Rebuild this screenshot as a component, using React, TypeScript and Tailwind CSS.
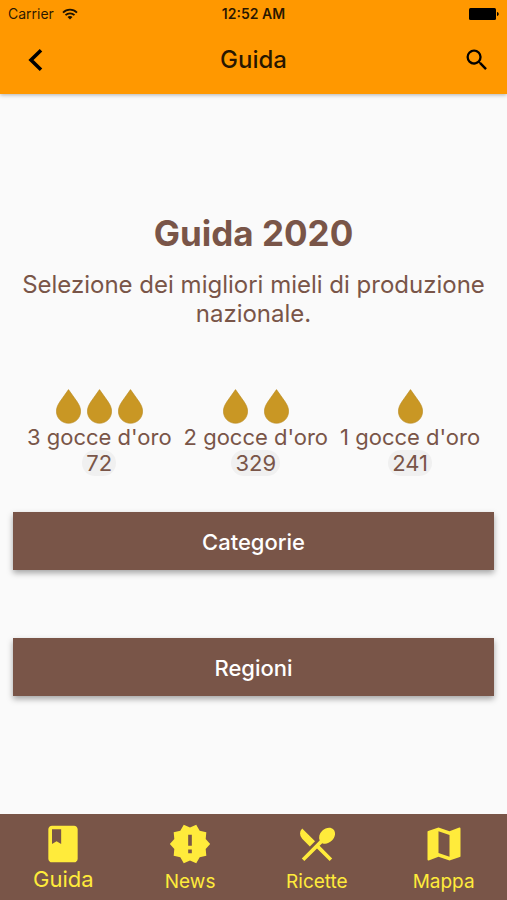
import { MdClass, MdMap, MdNewReleases, MdRestaurantMenu, MdSearch } from 'react-icons/md';

const ratings = [
  { drops: 3, label: "3 gocce d'oro", count: 72, gap: 'gap-[6px]' },
  { drops: 2, label: "2 gocce d'oro", count: 329, gap: 'gap-4' },
  { drops: 1, label: "1 gocce d'oro", count: 241, gap: 'gap-0' },
];

const tabs = [
  { label: 'Guida', icon: MdClass, active: true },
  { label: 'News', icon: MdNewReleases, active: false },
  { label: 'Ricette', icon: MdRestaurantMenu, active: false },
  { label: 'Mappa', icon: MdMap, active: false },
];

function Drop() {
  return (
    <svg viewBox="0 0 25 35" className="h-[35px] w-[25px]" aria-hidden="true">
      <path
        d="M12.5.6L21 12.6C23.200 15.900 24.600 18.800 24.600 22.300 24.600 29.100 19.200 34.300 12.500 34.300S.4 29.100.4 22.300C.4 18.800 1.800 15.900 4 12.600Z"
        fill="#c99724"
        stroke="#b98a20"
        strokeWidth=".6"
      />
    </svg>
  );
}

function StatusBar() {
  return (
    <div className="grid h-7 grid-cols-3 items-center px-2 text-sm text-black/85">
      <div className="flex items-center gap-2">
        <span>Carrier</span>
        <svg viewBox="0 0 16 12" className="h-3 w-4" fill="none" stroke="#1c1200" strokeWidth="1.800" aria-hidden="true">
          <path d="M1 4.600C5 .6 11 .6 15 4.600" />
          <path d="M3.500 7.200C6 4.700 10 4.700 12.500 7.200" />
          <path d="M8 11.500 5.500 9C7 7.700 9 7.700 10.500 9Z" fill="#1c1200" stroke="none" />
        </svg>
      </div>
      <span className="text-center font-semibold whitespace-nowrap">12:52 AM</span>
      <svg viewBox="0 0 30 12" className="h-3 w-[30px] justify-self-end" aria-hidden="true">
        <rect width="27" height="12" rx="1.500" />
        <path d="M28 4c2.300.5 2.300 3.500 0 4Z" />
      </svg>
    </div>
  );
}

export default function App() {
  return (
    <div className="flex min-h-screen flex-col bg-[#fafafa] font-['Inter','Liberation_Sans',sans-serif] text-[#795548]">
      {/* App bar */}
      <header className="bg-[#ff9800] pb-0.5 shadow-[0_1px_4px_rgba(0,0,0,0.3)]">
        <StatusBar />
        <div className="grid h-16 grid-cols-[1fr_auto_1fr] items-center px-4 text-black/85">
          <button type="button" aria-label="Indietro" className="justify-self-start pl-1">
            <svg viewBox="0 0 28 28" className="size-7" fill="none" stroke="#000" strokeWidth="3.600" aria-hidden="true">
              <path d="M21 4.300 11 14 21 23.700" />
            </svg>
          </button>
          <h1 className="text-2xl font-medium">Guida</h1>
          <button type="button" aria-label="Cerca" className="justify-self-end">
            <MdSearch className="size-7 text-black" />
          </button>
        </div>
      </header>

      <main className="flex flex-1 flex-col justify-center px-[13px]">
        <h2 className="text-center text-[35px] leading-[42px] font-bold">Guida 2020</h2>
        <p className="mt-4 text-center text-2xl leading-[29px]">
          Selezione dei migliori mieli di produzione nazionale.
        </p>

        <div className="mt-[61px] flex justify-center gap-3">
          {ratings.map((rating) => (
            <div key={rating.label} className="flex flex-col items-center text-[22px] leading-[26px]">
              <div className={`flex ${rating.gap}`}>
                {Array.from({ length: rating.drops }, (_, i) => (
                  <Drop key={i} />
                ))}
              </div>
              <span className="whitespace-nowrap">{rating.label}</span>
              <span className="rounded-full bg-[#f0f0f0] px-1">{rating.count}</span>
            </div>
          ))}
        </div>

        <div className="mt-9 flex flex-col gap-17">
          <button type="button" className="h-[58px] bg-[#795548] pt-0.5 text-[22px] font-medium text-white shadow-[0_3px_6px_rgba(0,0,0,0.35)]">
            Categorie
          </button>
          <button type="button" className="h-[58px] bg-[#795548] pt-0.5 text-[22px] font-medium text-white shadow-[0_3px_6px_rgba(0,0,0,0.35)]">
            Regioni
          </button>
        </div>
      </main>

      {/* Bottom navigation */}
      <nav className="grid h-[86px] grid-cols-4 bg-[#795548] pt-2 text-[#ffeb3b]">
        {tabs.map(({ label, icon: Icon, active }) => (
          <a key={label} href="#" className="flex flex-col items-center">
            <Icon className="size-11 shrink-0" />
            <span className={active ? 'text-[22px] leading-[26px]' : 'text-[19px] leading-8'}>{label}</span>
          </a>
        ))}
      </nav>
    </div>
  );
}
